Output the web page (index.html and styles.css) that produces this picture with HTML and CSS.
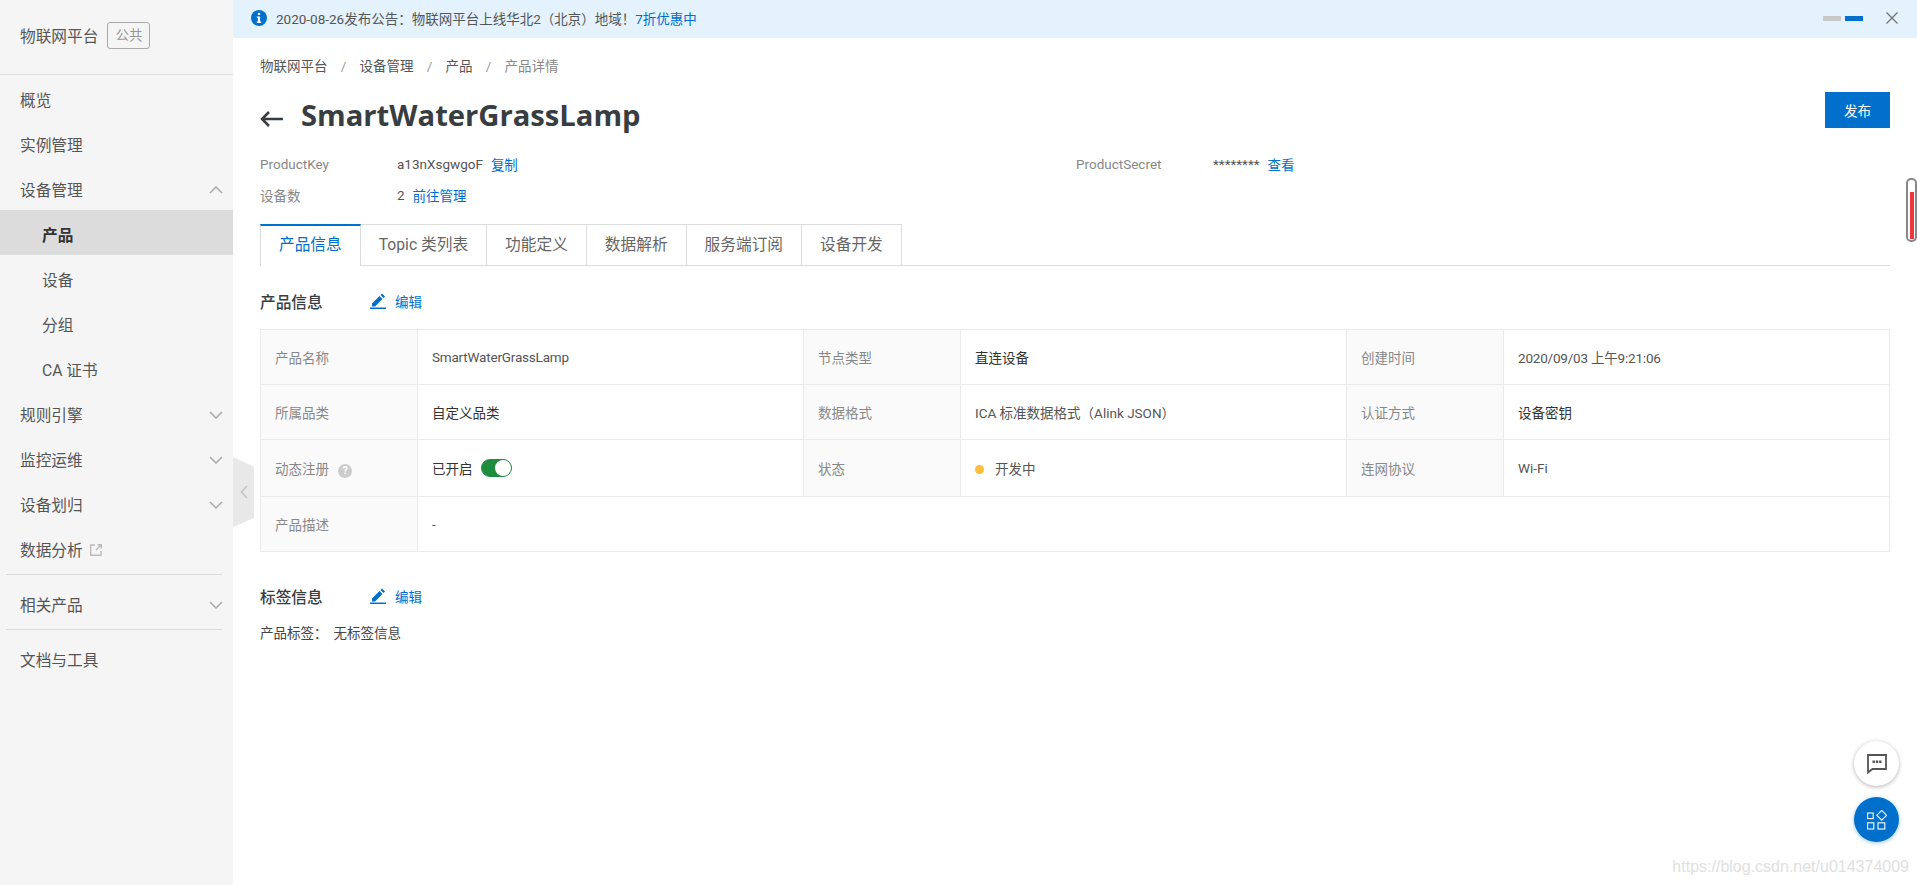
FILE: index.html
```html
<!DOCTYPE html>
<html lang="zh-CN">
<head>
    <meta charset="UTF-8">
    <title>物联网平台 - 产品详情</title>
    <link rel="stylesheet" href="styles.css">
</head>
<body>
    <aside class="sidebar">
        <div class="sidebar-head">
            <span class="sidebar-title">物联网平台</span>
            <span class="badge">公共</span>
        </div>
        <nav class="menu">
            <div class="menu-item">概览</div>
            <div class="menu-item">实例管理</div>
            <div class="menu-item">设备管理
                <svg class="chevron" viewBox="0 0 14 8"><path d="M1 7l6-6 6 6"/></svg>
            </div>
            <div class="menu-item sub active">产品</div>
            <div class="menu-item sub">设备</div>
            <div class="menu-item sub">分组</div>
            <div class="menu-item sub">CA 证书</div>
            <div class="menu-item">规则引擎
                <svg class="chevron" viewBox="0 0 14 8"><path d="M1 1l6 6 6-6"/></svg>
            </div>
            <div class="menu-item">监控运维
                <svg class="chevron" viewBox="0 0 14 8"><path d="M1 1l6 6 6-6"/></svg>
            </div>
            <div class="menu-item">设备划归
                <svg class="chevron" viewBox="0 0 14 8"><path d="M1 1l6 6 6-6"/></svg>
            </div>
            <div class="menu-item">数据分析
                <svg class="ext-icon" viewBox="0 0 12 12"><path d="M5 1H.7v10.300H11V7M6 6l5-5M7.500 .7H11.300V4.500"/></svg>
            </div>
            <div class="menu-divider"></div>
            <div class="menu-item">相关产品
                <svg class="chevron" viewBox="0 0 14 8"><path d="M1 1l6 6 6-6"/></svg>
            </div>
            <div class="menu-divider"></div>
            <div class="menu-item">文档与工具</div>
        </nav>
        <div class="collapse-handle">
            <svg viewBox="0 0 8 14"><path d="M7 1L1.500 7 7 13"/></svg>
        </div>
    </aside>

    <main class="main">
        <div class="notice">
            <svg class="notice-icon" viewBox="0 0 16 16">
                <circle cx="8" cy="8" r="8" fill="#0070cc"/>
                <rect x="6.900" y="2.800" width="2.200" height="2.200" fill="#fff"/>
                <path d="M5.800 6.400h3.300v5.200h1.100v1.300H5.800v-1.300h1.100V7.700H5.800z" fill="#fff"/>
            </svg>
            <span class="notice-text">2020-08-26发布公告：物联网平台上线华北2（北京）地域！<a class="link">7折优惠中</a></span>
            <div class="notice-dots">
                <span class="dot-bar"></span>
                <span class="dot-bar current"></span>
            </div>
            <svg class="notice-close" viewBox="0 0 12 12"><path d="M.5 .5l11 11M11.500 .5l-11 11"/></svg>
        </div>

        <div class="content">
            <div class="breadcrumb">
                <span>物联网平台</span><i>/</i><span>设备管理</span><i>/</i><span>产品</span><i>/</i><span class="current">产品详情</span>
            </div>

            <div class="page-head">
                <svg class="back-arrow" viewBox="0 0 23 16"><path d="M23 8H2M9 1L2 8l7 7"/></svg>
                <h1>SmartWaterGrassLamp</h1>
                <button class="btn-primary">发布</button>
            </div>

            <div class="meta">
                <div class="meta-row"><span class="meta-label">ProductKey</span><span>a13nXsgwgoF</span><a class="link copy">复制</a></div>
                <div class="meta-row"><span class="meta-label">ProductSecret</span><span>********</span><a class="link copy">查看</a></div>
                <div class="meta-row"><span class="meta-label">设备数</span><span>2</span><a class="link copy">前往管理</a></div>
            </div>

            <div class="tabs">
                <div class="tab active">产品信息</div>
                <div class="tab">Topic 类列表</div>
                <div class="tab">功能定义</div>
                <div class="tab">数据解析</div>
                <div class="tab">服务端订阅</div>
                <div class="tab">设备开发</div>
            </div>

            <div class="section-head">
                <h2>产品信息</h2>
                <svg class="edit-icon" viewBox="0 0 16 16"><path d="M2 13.500v-3L9.500 3l3 3L5 13.500zM10.500 2L12 .5l3 3L13.500 5z"/><rect x="0" y="14.500" width="16" height="1.500"/></svg>
                <a class="link">编辑</a>
            </div>

            <table class="info-table">
                <colgroup>
                    <col class="col-label"><col class="col-value">
                    <col class="col-label"><col class="col-value">
                    <col class="col-label"><col>
                </colgroup>
                <tr>
                    <th>产品名称</th><td class="tight">SmartWaterGrassLamp</td>
                    <th>节点类型</th><td class="strong">直连设备</td>
                    <th>创建时间</th><td class="tight">2020/09/03 上午9:21:06</td>
                </tr>
                <tr>
                    <th>所属品类</th><td class="strong">自定义品类</td>
                    <th>数据格式</th><td>ICA 标准数据格式（Alink JSON）</td>
                    <th>认证方式</th><td class="strong">设备密钥</td>
                </tr>
                <tr class="row-tall">
                    <th>动态注册 <span class="help">?</span></th>
                    <td class="strong"><div class="switch-cell">已开启<span class="switch"></span></div></td>
                    <th>状态</th>
                    <td><span class="status-dot"></span>开发中</td>
                    <th>连网协议</th><td>Wi-Fi</td>
                </tr>
                <tr>
                    <th>产品描述</th><td colspan="5">-</td>
                </tr>
            </table>

            <div class="section-head tags-head">
                <h2>标签信息</h2>
                <svg class="edit-icon" viewBox="0 0 16 16"><path d="M2 13.500v-3L9.500 3l3 3L5 13.500zM10.500 2L12 .5l3 3L13.500 5z"/><rect x="0" y="14.500" width="16" height="1.500"/></svg>
                <a class="link">编辑</a>
            </div>
            <div class="tag-line"><span>产品标签：</span><span>无标签信息</span></div>
        </div>
    </main>

    <div class="scroll-thumb"><span></span></div>

    <div class="float-btn chat">
        <svg viewBox="0 0 20 20"><path d="M1 1h18v14H5.500L1 18.500z" fill="none" stroke="#555" stroke-width="1.800"/><path d="M5.500 6.500h2.400v2.400H5.500zM8.800 6.500h2.400v2.400H8.800zM12.100 6.500h2.400v2.400h-2.400z" fill="#555"/></svg>
    </div>
    <div class="float-btn apps">
        <svg viewBox="0 0 20 20" fill="none" stroke="#fff" stroke-width="1.100"><rect x=".6" y="3" width="5.600" height="5.600"/><rect x=".6" y="12.800" width="6.200" height="6.200"/><rect x="11" y="12.800" width="6.800" height="6.200"/><path d="M14.700 .4l4.900 4.900-4.900 4.900-4.900-4.900z"/></svg>
    </div>
    <div class="watermark">https://blog.csdn.net/u014374009</div>
</body>
</html>
```

FILE: styles.css
```css
* {
    margin: 0;
    padding: 0;
    box-sizing: border-box;
}

body {
    display: flex;
    height: 885px;
    overflow: hidden;
    background: #fff;
    color: #333;
    font-family: Roboto, "Noto Sans CJK SC", sans-serif;
    font-size: 13.5px;
}

.link {
    color: #0070cc;
}

/* sidebar */
.sidebar {
    position: relative;
    flex: 0 0 233px;
    background: #f5f5f5;
    color: #555;
}

.sidebar-head {
    display: flex;
    align-items: center;
    height: 75px;
    padding: 0 0 3px 20px;
    border-bottom: 1px solid #dedede;
}

.sidebar-title {
    font-size: 15.7px;
}

.badge {
    margin-left: 9px;
    padding: 0 7px;
    height: 27px;
    line-height: 25px;
    border: 1px solid #aaa;
    border-radius: 3px;
    color: #999;
}

.menu-item {
    position: relative;
    height: 45px;
    padding: 4px 0 0 20px;
    display: flex;
    align-items: center;
    font-size: 15.7px;
}

.menu-item.sub {
    padding-left: 42px;
}

.menu-item.active {
    background: #dcdcdc;
    color: #333;
    font-weight: 700;
}

.menu-divider {
    height: 1px;
    margin: 4px 11px 5px 6px;
    background: #dcdcdc;
}

.chevron {
    position: absolute;
    right: 10px;
    top: 21px;
    width: 14px;
    height: 8px;
    fill: none;
    stroke: #aaa;
    stroke-width: 1.500;
}

.ext-icon {
    width: 12px;
    height: 12px;
    margin-left: 7px;
    fill: none;
    stroke: #bbb;
    stroke-width: 1.400;
}

.collapse-handle {
    position: absolute;
    left: 233px;
    top: 457px;
    width: 21px;
    height: 70px;
    display: flex;
    align-items: center;
    padding-left: 7px;
    background: #e8e8e8;
    clip-path: polygon(0 0, 100% 14%, 100% 87%, 0 100%);
}

.collapse-handle svg {
    width: 8px;
    height: 14px;
    fill: none;
    stroke: #c4c4c4;
    stroke-width: 1.600;
}

/* main */
.main {
    flex: 1;
    min-width: 0;
}

.notice {
    display: flex;
    align-items: center;
    height: 38px;
    padding: 0 19px 2px 18px;
    background: #e3f2fd;
    color: #555;
}

.notice-icon {
    width: 16px;
    height: 16px;
    margin-right: 9px;
}

.notice-text {
    flex: 1;
    font-size: 13.5px;
}

.notice-dots {
    display: flex;
    gap: 4px;
    margin-right: 23px;
}

.dot-bar {
    width: 18px;
    height: 5px;
    background: #c8c8c8;
}

.dot-bar.current {
    background: #0070cc;
}

.notice-close {
    width: 12px;
    height: 12px;
    fill: none;
    stroke: #777;
    stroke-width: 1.400;
}

.content {
    padding: 0 27px;
}

.breadcrumb {
    display: flex;
    height: 20px;
    margin-top: 18px;
    line-height: 20px;
    color: #555;
}

.breadcrumb i {
    width: 32px;
    text-align: center;
    font-style: normal;
    color: #999;
}

.breadcrumb .current {
    color: #888;
}

.page-head {
    display: flex;
    align-items: center;
    height: 56px;
    margin-top: 11px;
}

.back-arrow {
    width: 23px;
    height: 16px;
    margin-top: 7px;
    fill: none;
    stroke: #373d41;
    stroke-width: 2.500;
}

.page-head h1 {
    flex: 1;
    margin-left: 18px;
    color: #373d41;
    font-family: "Open Sans", "Noto Sans CJK SC", sans-serif;
    font-size: 29.2px;
    font-weight: 700;
}

.btn-primary {
    width: 65px;
    height: 36px;
    margin-top: -10px;
    border: 0;
    background: #0070cc;
    color: #fff;
    font-family: inherit;
    font-size: 13.5px;
}

.meta {
    display: grid;
    grid-template-columns: 816px 1fr;
    grid-auto-rows: 31px;
    margin-top: 5px;
}

.meta-row {
    display: flex;
    align-items: center;
    color: #555;
}

.meta-label {
    width: 137px;
    color: #888;
}

.copy {
    margin-left: 8px;
}

.tabs {
    display: flex;
    height: 42px;
    margin-top: 14px;
    border-bottom: 1px solid #dcdcdc;
}

.tab {
    height: 42px;
    padding: 0 18px;
    line-height: 40px;
    border: 1px solid #dcdcdc;
    border-left: 0;
    font-size: 15.7px;
    color: #666;
}

.tab.active {
    height: 42px;
    border-top: 2px solid #0070cc;
    border-left: 1px solid #dcdcdc;
    border-bottom: 0;
    background: #fff;
    color: #0070cc;
    line-height: 38px;
}

.section-head {
    display: flex;
    align-items: center;
    height: 24px;
    margin-top: 23px;
}

.section-head h2 {
    width: 110px;
    font-size: 15.7px;
    font-weight: 500;
    color: #373d41;
}

.edit-icon {
    width: 16px;
    height: 16px;
    margin-right: 9px;
    fill: #0070cc;
}

.info-table {
    width: 100%;
    margin-top: 16px;
    border-collapse: collapse;
    table-layout: fixed;
}

.info-table tr {
    height: 55px;
}

.info-table .row-tall {
    height: 57px;
}

.info-table th,
.info-table td {
    padding: 0 14px;
    border: 1px solid #ebebeb;
    text-align: left;
    font-weight: 400;
    color: #555;
}

.info-table th {
    background: #fafafa;
    color: #888;
}

.info-table .strong {
    color: #333;
}

.info-table .tight {
    letter-spacing: -0.2px;
}

.col-label {
    width: 157px;
}

.col-value {
    width: 386px;
}

.help {
    display: inline-block;
    width: 14px;
    height: 14px;
    margin-left: 6px;
    border-radius: 50%;
    background: #ccc;
    color: #fff;
    font-size: 11px;
    font-weight: 700;
    line-height: 14px;
    text-align: center;
}

.switch-cell {
    display: flex;
    align-items: center;
}

.switch {
    display: block;
    width: 31px;
    height: 18px;
    margin-left: 8px;
    border: 1px solid #1e8e3e;
    border-radius: 9px;
    background: #1e8e3e;
    position: relative;
}

.switch::after {
    content: "";
    position: absolute;
    right: 0;
    top: 0;
    width: 16px;
    height: 16px;
    border-radius: 50%;
    background: #fff;
}

.status-dot {
    display: inline-block;
    width: 9px;
    height: 9px;
    margin-right: 11px;
    border-radius: 50%;
    background: #ffbe3d;
}

.tags-head {
    margin-top: 32px;
}

.tag-line {
    display: flex;
    gap: 6px;
    margin-top: 14px;
    color: #444;
}

/* overlays */
.scroll-thumb {
    position: absolute;
    right: 0;
    top: 178px;
    width: 11px;
    height: 64px;
    padding: 12px 1px 1px 2px;
    border: 2px solid #888;
    border-radius: 5px;
    background: #fff;
}

.scroll-thumb span {
    display: block;
    width: 4px;
    height: 100%;
    background: #f0353f;
}

.float-btn {
    position: absolute;
    right: 18px;
    width: 45px;
    height: 45px;
    display: flex;
    align-items: center;
    justify-content: center;
    border-radius: 50%;
}

.float-btn svg {
    width: 20px;
    height: 20px;
}

.float-btn.chat {
    top: 741px;
    background: #fff;
    box-shadow: 0 1px 4px rgba(0,0,0,0.3);
}

.float-btn.apps {
    top: 797px;
    background: #0070cc;
    box-shadow: 0 1px 4px rgba(0,112,204,0.4);
}

.watermark {
    position: absolute;
    right: 8px;
    top: 858px;
    color: #e0e0e0;
    font-family: "Liberation Sans", sans-serif;
    font-size: 16px;
}
```
